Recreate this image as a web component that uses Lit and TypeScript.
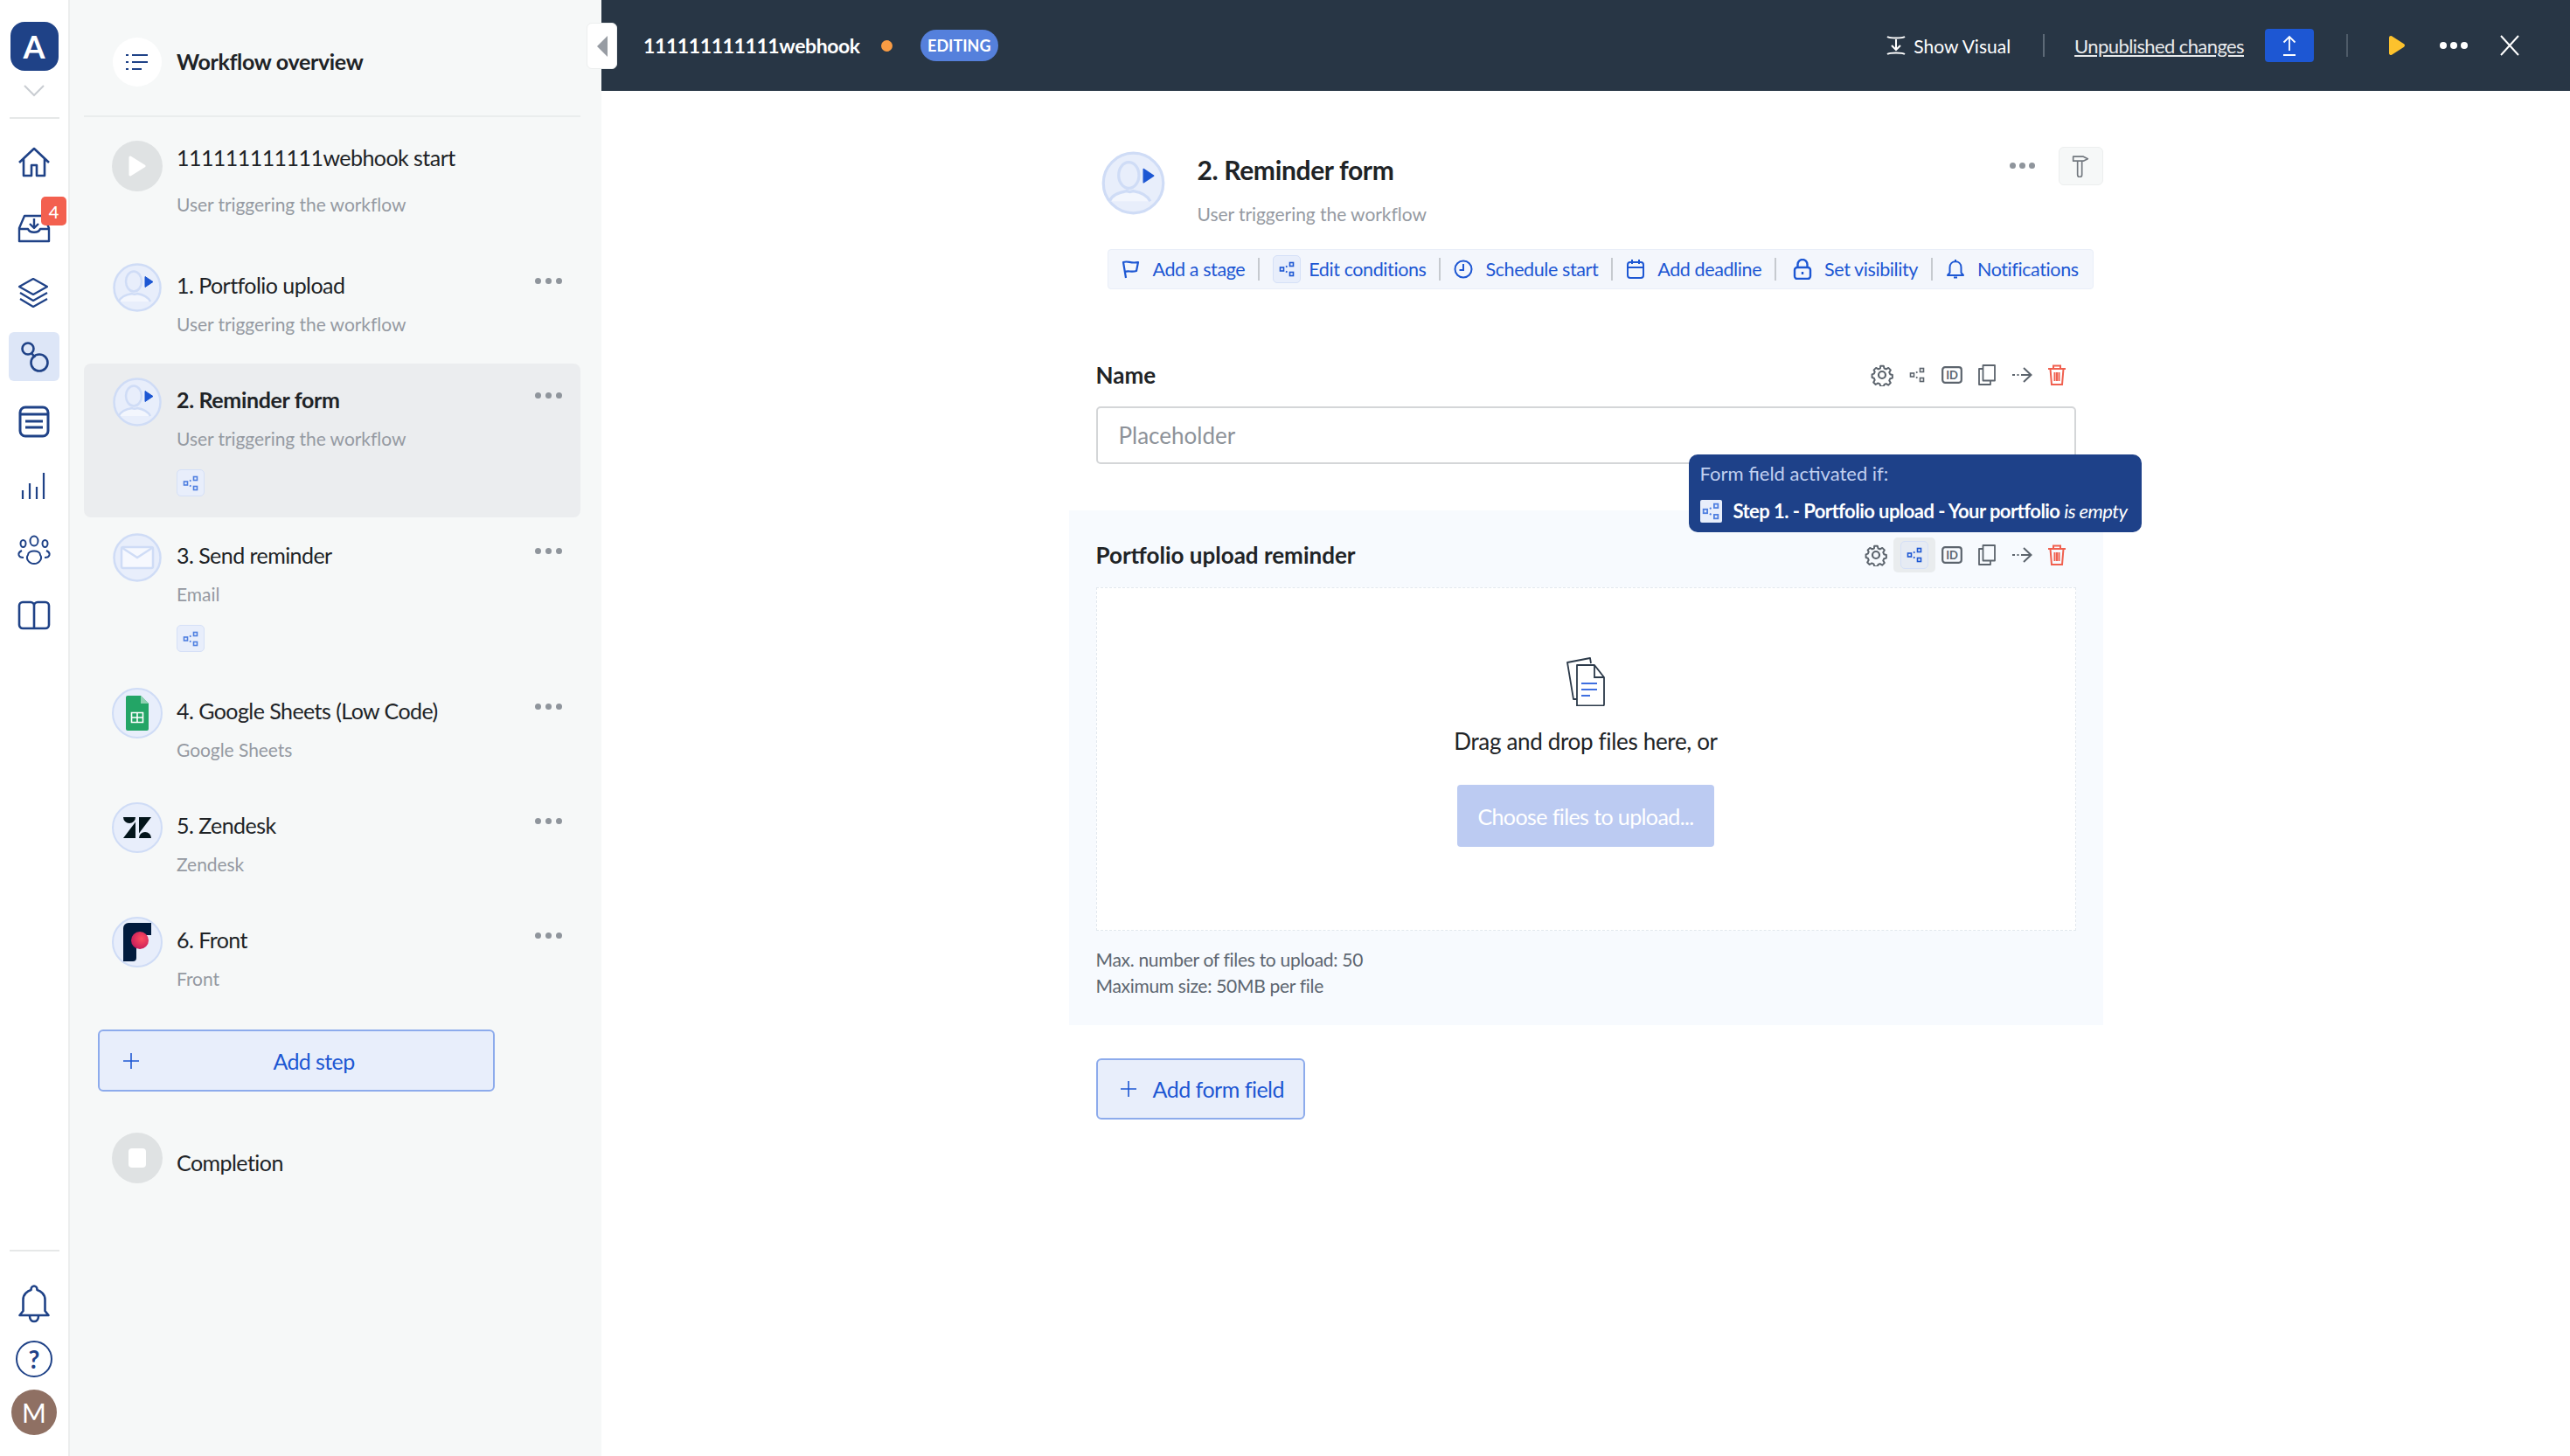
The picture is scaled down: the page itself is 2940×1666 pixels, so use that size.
import { LitElement, html, css, svg } from "lit";
import { customElement } from "lit/decorators.js";

const NAVY = "#1f4287";
const BLUE = "#1d57d3";
const GREY = "#5c646d";

const icon = (w: number, h: number, vb: string, body: unknown, cls = "") =>
  html`<svg class=${cls} width=${w} height=${h} viewBox=${vb} fill="none">${body}</svg>`;

// small "branch" glyph used on chips and in the field toolbars
const branch = (c: string, s = 18) =>
  icon(s, s, "0 0 18 18", svg`<g stroke=${c} stroke-width="1.6">
    <rect x="1.5" y="7" width="4" height="4"/><rect x="12.5" y="1.5" width="4" height="4"/><rect x="12.5" y="12.5" width="4" height="4"/></g>
    <path d="M8 6.5l1.5-1M8 11.5l1.5 1" stroke=${c} stroke-width="1.8"/>`);

const userIcon = (s: number) =>
  icon(s, s, "0 0 58 58", svg`<circle cx="29" cy="29" r="26.5" fill="#e8eefb" stroke="#cfdcf6" stroke-width="2.5"/>
    <ellipse cx="25" cy="22" rx="9" ry="11.5" stroke="#cfdcf6" stroke-width="2.5"/>
    <path d="M8 45c2-6 9-8 15-9 2 1 4 1 6 0 6 1 12 3 15 9" stroke="#cfdcf6" stroke-width="2.5" fill="#f3f6fd"/>
    <path d="M38 16.5l9 6-9 6z" fill=${BLUE} stroke=${BLUE} stroke-width="1" stroke-linejoin="round"/>`);

const circled = (body: unknown) => html`<div class="logo-c">${body}</div>`;

const mail = html`<svg width="58" height="58" viewBox="0 0 58 58" fill="none"><circle cx="29" cy="29" r="26.5" fill="#e8eefb" stroke="#cfdcf6" stroke-width="2.5"/>
  <rect x="11" y="17" width="36" height="24" rx="2" fill="#f6f8fe" stroke="#cfdcf6" stroke-width="2.5"/><path d="M12 18l17 11 17-11" stroke="#cfdcf6" stroke-width="2.5"/></svg>`;

const sheets = circled(icon(26, 40, "0 0 26 40", svg`<path d="M2 0h15l9 9v29a2 2 0 0 1-2 2H2a2 2 0 0 1-2-2V2a2 2 0 0 1 2-2z" fill="#23a566"/>
  <path d="M17 0l9 9h-9z" fill="#8ed1b1"/><path d="M6.5 19.5h13v11h-13zM6.5 25h13M13 19.5v11" stroke="#fff" stroke-width="1.6"/>`));

const zendesk = circled(icon(32, 24, "0 0 32 24", svg`<path fill="#03141a" d="M14 5.5V24H0zM18 18.5V0h14zM0 0h14a7 7 0 0 1-14 0zM18 24a7 7 0 0 1 14 0z"/>`));

const front = circled(icon(32, 44, "0 0 32 44", svg`<defs><radialGradient id="fg" cx=".6" cy=".4" r=".7"><stop offset="0" stop-color="#ff4d5e"/><stop offset="1" stop-color="#c2185b"/></radialGradient></defs>
  <path fill="#011b3d" d="M6 0h26v14H24c-6 0-9 3-9 9v17a4 4 0 0 1-4 4H0V6a6 6 0 0 1 6-6z"/><circle cx="19" cy="20" r="10" fill="url(#fg)"/>`));

const steps = [
  { title: "1. Portfolio upload", sub: "User triggering the workflow", logo: userIcon(58) },
  { title: "2. Reminder form", sub: "User triggering the workflow", logo: userIcon(58), active: true, chip: true },
  { title: "3. Send reminder", sub: "Email", logo: mail, chip: true },
  { title: "4. Google Sheets (Low Code)", sub: "Google Sheets", logo: sheets },
  { title: "5. Zendesk", sub: "Zendesk", logo: zendesk },
  { title: "6. Front", sub: "Front", logo: front },
];

const s = (d: unknown) => icon(38, 38, "0 0 38 38", d);
const rail = [
  s(svg`<path d="M2 19L19 3l17 16M7 15v19h9v-12h6v12h9V15" stroke=${NAVY} stroke-width="2.6" stroke-linejoin="round"/>`),
  s(svg`<path d="M2 35V20L8 6h22l6 14v15zM2 21h10c2 5 12 5 14 0h10M19 9v11M14 15l5 5 5-5" stroke=${NAVY} stroke-width="2.4" stroke-linejoin="round"/>`),
  s(svg`<path d="M18 4l16 9-16 9-16-9zM3 20l15 9 16-9M3 27l15 9 16-9" stroke=${NAVY} stroke-width="2.2" stroke-linejoin="round"/>`),
  s(svg`<circle cx="12" cy="10" r="6.5" stroke=${NAVY} stroke-width="2.6"/><circle cx="25" cy="26" r="9.5" stroke=${NAVY} stroke-width="2.6"/><path d="M16 15l4 5" stroke=${NAVY} stroke-width="2.6"/>`),
  s(svg`<rect x="3" y="3" width="32" height="33" rx="6" stroke=${NAVY} stroke-width="3"/><path d="M3 11h32M9 19h20M9 26h20" stroke=${NAVY} stroke-width="2.8"/>`),
  s(svg`<path d="M6 34V24M14 34V16M22 34V20M30 34V4" stroke=${NAVY} stroke-width="2.2"/>`),
  icon(40, 36, "0 0 40 36", svg`<g stroke=${NAVY} stroke-width="2"><ellipse cx="20" cy="7" rx="4.5" ry="5.5"/><ellipse cx="7.5" cy="10" rx="3" ry="4"/><ellipse cx="32.5" cy="10" rx="3" ry="4"/>
    <path d="M13 23c0-6 14-6 14 0 3 4-1 10-7 10s-10-6-7-10zM6 18c-6 3-4 8 2 8M34 18c6 3 4 8-2 8"/></g>`),
  s(svg`<path d="M19 6V34H6a4 4 0 0 1-4-4V8a4 4 0 0 1 4-4h9a4 4 0 0 1 4 4a4 4 0 0 1 4-4h9a4 4 0 0 1 4 4v22a4 4 0 0 1-4 4H19" stroke=${NAVY} stroke-width="2.6"/>`),
];

const tb = (d: unknown) => icon(22, 24, "0 0 22 24", d);
const tools = [
  { label: "Add a stage", ic: tb(svg`<path d="M5 22L2 4c6-2 8 2 17 0l-2 10c-6 2-9-1-13 1" stroke=${BLUE} stroke-width="2.2" stroke-linejoin="round"/>`) },
  { label: "Edit conditions", ic: html`<span class="chip tool-chip">${branch(BLUE, 18)}</span>`, tight: true },
  { label: "Schedule start", ic: tb(svg`<circle cx="11" cy="12" r="9.5" stroke=${BLUE} stroke-width="2"/><path d="M11 6v7H6.5" stroke=${BLUE} stroke-width="2"/>`) },
  { label: "Add deadline", ic: tb(svg`<rect x="2" y="4" width="18" height="18" rx="3" stroke=${BLUE} stroke-width="2"/><path d="M2 10h18M7 1v5M15 1v5" stroke=${BLUE} stroke-width="2"/>`) },
  { label: "Set visibility", ic: tb(svg`<rect x="2" y="10" width="18" height="13" rx="3" stroke=${BLUE} stroke-width="2.4"/><path d="M5.5 10V6.5a5.5 5.5 0 0 1 11 0V10M11 15v3" stroke=${BLUE} stroke-width="2.4"/>`), wide: true },
  { label: "Notifications", ic: tb(svg`<path d="M2 19h18l-2.5-3V10c0-9-13-9-13 0v6zM9 21.5h4M11 1v2" stroke=${BLUE} stroke-width="2" stroke-linejoin="round"/>`) },
];

const gear = icon(26, 26, "0 0 26 26", svg`<path d="M11 1.5h4l.8 3.2 2.4 1 2.9-1.7 2.8 2.8-1.7 2.9 1 2.4 3 .9v4l-3 .8-1 2.4 1.7 2.9-2.8 2.8-2.9-1.7-2.4 1-.8 2.3h-4l-.8-3-2.4-1-2.9 1.7-2.8-2.8 1.7-2.9-1-2.4-2.5-.8v-4l2.5-.9 1-2.4L2.6 6.8l2.8-2.8 2.9 1.7 2.4-1z" transform="translate(1.3 1.3) scale(.9)" stroke=${GREY} stroke-width="2.2" stroke-linejoin="round"/><circle cx="13" cy="13" r="4" stroke=${GREY} stroke-width="2.2"/>`);
const idIcon = icon(24, 20, "0 0 24 20", svg`<rect x="1.2" y="1.2" width="21.6" height="17.6" rx="3" stroke=${GREY} stroke-width="2.2"/><text x="12" y="15" text-anchor="middle" font-family="Lato" font-weight="700" font-size="13" fill=${GREY}>ID</text>`);
const copy = icon(20, 24, "0 0 20 24", svg`<path d="M5.5 1h9l4.5 0v17.5H5.5z M5.5 5H1v18h13v-4.5" stroke=${GREY} stroke-width="1.8" stroke-linejoin="round"/>`);
const arrow = icon(24, 20, "0 0 24 20", svg`<path d="M1 10h3M6.5 10h2M11 10h11M14 2l8.5 8-8.5 8" stroke=${GREY} stroke-width="2"/>`);
const trash = icon(22, 24, "0 0 22 24", svg`<path d="M1 5h20M7 5V1.5h8V5M3.5 5l1.5 18h12l1.5-18M8.5 9v10M11 9v10M13.5 9v10" stroke="#f0604f" stroke-width="2"/>`);

const dots = html`<div class="dots"><i></i><i></i><i></i></div>`;
const plus = (c: string) => icon(20, 20, "0 0 20 20", svg`<path d="M10 1v18M1 10h18" stroke=${c} stroke-width="1.6"/>`);

@customElement("app-root")
export class AppRoot extends LitElement {
  static styles = css`
    :host { display: block; height: 1666px; font-family: "Lato", "Noto Sans", sans-serif; color: #202326; overflow: hidden; }
    .app { display: flex; height: 100%; }
    svg { display: block; flex: none; }

    .rail { width: 80px; flex: none; background: #fff; border-right: 2px solid #eceeee; box-sizing: border-box; display: flex; flex-direction: column; align-items: center; }
    .logo { margin-top: 25px; width: 55px; height: 56px; border-radius: 16px; background: #1f4287; color: #fff; font-size: 36px; font-weight: 700; display: flex; align-items: center; justify-content: center; }
    .chev { margin-top: 16px; }
    .rule { width: 57px; height: 2px; background: #e6e8e8; flex: none; }
    .rail .top-rule { margin-top: 23px; }
    .nav { margin-top: 22px; display: flex; flex-direction: column; align-items: center; }
    .nav-i { position: relative; width: 58px; height: 56px; display: flex; align-items: center; justify-content: center; margin-bottom: 18px; border-radius: 6px; }
    .nav-i.on { background: #dde6f7; }
    .badge { position: absolute; left: 37px; top: -7px; width: 29px; height: 33px; border-radius: 5px; background: #f3604f; color: #fff; font-size: 20px; font-weight: 500; display: flex; align-items: center; justify-content: center; }
    .bottom { margin-top: auto; display: flex; flex-direction: column; align-items: center; padding-bottom: 24px; }
    .bell { margin-top: 38px; }
    .help { margin-top: 20px; width: 38px; height: 38px; border: 2px solid #1f4287; border-radius: 50%; color: #1f4287; font-size: 28px; font-weight: 700; display: flex; align-items: center; justify-content: center; }
    .avatar { margin-top: 14px; width: 52px; height: 52px; border-radius: 50%; background: #8f7063; color: #fff; font-size: 30px; display: flex; align-items: center; justify-content: center; }

    .side { width: 608px; flex: none; box-sizing: border-box; background: #f6f8f8; padding: 0 24px 0 16px; position: relative; }
    .toggle { position: absolute; left: 591px; top: 26px; width: 35px; height: 53px; box-sizing: border-box; background: #fff; border: 1px solid #eceeee; border-radius: 6px; display: flex; align-items: center; justify-content: center; z-index: 3; }
    .overview { height: 134px; box-sizing: border-box; border-bottom: 2px solid #eaeded; display: flex; align-items: center; gap: 17px; padding: 0 0 0 33px; }
    .ov-c { width: 56px; height: 56px; border-radius: 50%; background: #fff; display: flex; align-items: center; justify-content: center; margin-top: 10px; }
    .overview b { font-size: 25px; font-weight: 700; margin-top: 8px; letter-spacing: -0.33px; }

    .step { display: flex; padding: 15px 21px 0 32px; border-radius: 8px; margin-bottom: 2px; height: 114px; }
    .step.tall { height: 161px; }
    .step.active { background: #ebedef; }
    .step .ic { width: 58px; height: 58px; flex: none; }
    .logo-c { width: 58px; height: 58px; box-sizing: border-box; border: 2px solid #cfdcf6; border-radius: 50%; background: #e8eefb; display: flex; align-items: center; justify-content: center; }
    .gray-c { width: 58px; height: 58px; border-radius: 50%; background: #dfe2e3; display: flex; align-items: center; justify-content: center; }
    .txt { flex: 1; margin-left: 16px; padding-top: 10px; }
    .t { font-size: 25px; line-height: 32px; letter-spacing: -0.55px; }
    .active .t { font-weight: 700; letter-spacing: -0.35px; }
    .d { font-size: 21px; line-height: 28px; margin-top: 15px; color: #959aa2; letter-spacing: -0.05px; }
    .chip { display: inline-flex; align-items: center; justify-content: center; width: 32px; height: 31px; box-sizing: border-box; background: #e8eefb; border: 1px solid #d5e0f7; border-radius: 5px; }
    .txt .chip { margin-top: 21px; }
    .dots { display: flex; gap: 5px; margin-top: 18px; height: 7px; flex: none; }
    .dots i { width: 7px; height: 7px; border-radius: 50%; background: #8f959c; }
    .first { height: 151px; padding-top: 27px; margin: 0; box-sizing: border-box; }
    .first .txt { padding-top: 3px; }
    .first .d { margin-top: 24px; }
    .add-step { margin: 15px 0 0 16px; width: 454px; height: 71px; box-sizing: border-box; border: 2px solid #8dabec; border-radius: 6px; background: #e8eefb; color: #1d57d3; font-size: 25px; letter-spacing: -0.6px; display: flex; align-items: center; padding-left: 26px; }
    .add-step span { flex: 1; text-align: center; margin-right: 6px; }
    .done { display: flex; padding: 47px 0 0 32px; }
    .done .t { margin: 18px 0 0 16px; }
    .sq { width: 20px; height: 22px; border-radius: 4px; background: #fff; }

    .main { flex: 1; min-width: 0; display: flex; flex-direction: column; background: #fff; }
    .bar { height: 104px; flex: none; background: #283645; color: #fff; display: flex; align-items: center; padding: 0 57px 0 48px; }
    .bar .name { font-size: 23px; font-weight: 700; letter-spacing: -0.4px; }
    .o-dot { width: 13px; height: 13px; border-radius: 50%; background: #f99c44; margin-left: 24px; }
    .pill { margin-left: 32px; width: 89px; height: 36px; border-radius: 18px; background: #5580dc; font-size: 18px; font-weight: 700; display: flex; align-items: center; justify-content: center; }
    .bar .right { margin-left: auto; display: flex; align-items: center; }
    .visual { font-size: 21px; margin-left: 9px; }
    .vsep { width: 2px; height: 26px; background: #5d6a77; margin: 0 34px 0 37px; }
    .unpub { font-size: 22px; letter-spacing: -0.6px; text-decoration: underline; color: #e8eaec; }
    .up { margin-left: 24px; width: 56px; height: 38px; border-radius: 4px; background: #1d57d3; display: flex; align-items: center; justify-content: center; }
    .vsep2 { width: 2px; height: 26px; background: #4e5b68; margin: 0 46px 0 37px; }
    .bar .dots { margin: 0 0 0 39px; height: 8px; gap: 4px; }
    .bar .dots i { width: 8px; height: 8px; background: #fff; }
    .x { margin-left: 36px; }

    .form { width: 1183px; align-self: center; padding-top: 64px; position: relative; }
    .head { display: flex; height: 117px; padding: 0 0 0 36px; box-sizing: border-box; }
    .head .av { margin-top: 4px; }
    .head-t { flex: 1; margin: 6px 0 0 36px; }
    .head-t .h { font-size: 30px; font-weight: 700; line-height: 40px; letter-spacing: -0.35px; }
    .head-t .d { margin-top: 17px; }
    .head .dots { margin: 18px 27px 0 0; gap: 4px; }
    .head .dots i { width: 7px; height: 7px; }
    .ham { width: 51px; height: 44px; box-sizing: border-box; background: #f6f8f8; border: 1px solid #eceeee; border-radius: 6px; display: flex; align-items: center; justify-content: center; }

    .toolbar { margin-left: 44px; width: 1128px; height: 46px; box-sizing: border-box; background: #f3f6fc; border: 1px solid #e9eef8; border-radius: 4px; display: flex; align-items: center; padding-left: 15px; color: #1d57d3; font-size: 21.5px; letter-spacing: -0.4px; white-space: nowrap; }
    .tool { display: flex; align-items: center; gap: 14px; }
    .tool.tight { gap: 9px; }
    .tool.wide { margin-left: 4px; }
    .tool-chip { height: 32px; }
    .tsep { width: 2px; height: 26px; background: #c6cacf; margin: 0 15px; }

    .field { padding: 0 31px; margin-top: 78px; }
    .row { display: flex; align-items: center; height: 40px; }
    .label { font-size: 26px; font-weight: 700; flex: 1; }
    .acts { display: flex; align-items: center; margin-right: 2px; }
    .acts > * { width: 40px; display: flex; justify-content: center; }
    .acts .sel { width: 48px; height: 40px; margin: 0 -1px 0 0; align-items: center; background: #e9ecee; border-radius: 5px; }
    .acts .sel .chip { width: 32px; height: 32px; background: #e6ebf3; }
    .input { margin-top: 16px; height: 66px; box-sizing: border-box; border: 2px solid #d4d6d8; border-radius: 5px; padding-left: 24px; color: #8d9299; font-size: 26px; display: flex; align-items: center; background: #fff; }
    .section { margin-top: 53px; background: #f7fafe; padding: 31px 31px 30px; }
    .drop { margin-top: 17px; height: 393px; box-sizing: border-box; background: #fff; border: 1px dashed #e2e8ee; display: flex; flex-direction: column; align-items: center; padding-top: 79px; }
    .drop p { margin: 24px 0 0; font-size: 26px; line-height: 32px; letter-spacing: -0.33px; }
    .choose { margin-top: 34px; width: 294px; height: 71px; border-radius: 4px; background: #bccbf2; color: #fff; font-size: 25px; letter-spacing: -0.6px; display: flex; align-items: center; justify-content: center; }
    .meta { margin-top: 18px; font-size: 21px; line-height: 30px; color: #5d6670; letter-spacing: -0.3px; }
    .add-field { margin: 38px 0 0 31px; width: 239px; height: 70px; box-sizing: border-box; border: 2px solid #8dabec; border-radius: 6px; background: #e8eefb; color: #1d57d3; font-size: 25px; letter-spacing: -0.5px; display: flex; align-items: center; gap: 18px; padding-left: 25px; }

    .tip { position: absolute; left: 709px; top: 416px; width: 518px; height: 89px; box-sizing: border-box; background: #1e4189; border-radius: 10px; padding: 8px 0 0 13px; color: #fff; z-index: 2; }
    .tip .a { font-size: 22px; line-height: 28px; color: #c0cff0; }
    .tip .b { display: flex; align-items: center; gap: 13px; margin-top: 15px; font-size: 22px; font-weight: 700; letter-spacing: -0.55px; white-space: nowrap; }
    .tip .b em { font-weight: 400; }
    .tip .chip { width: 25px; height: 26px; border: none; border-radius: 2px; }
  `;

  render() {
    return html`<div class="app">
      ${this.renderRail()}
      ${this.renderSide()}
      <div class="main">
        ${this.renderBar()}
        ${this.renderForm()}
      </div>
    </div>`;
  }

  renderRail() {
    return html`<nav class="rail">
      <div class="logo">A</div>
      <div class="chev">${icon(24, 14, "0 0 24 14", svg`<path d="M1 1l11 11L23 1" stroke="#c9cdd2" stroke-width="2"/>`)}</div>
      <div class="rule top-rule"></div>
      <div class="nav">
        ${rail.map((r, i) => html`<div class="nav-i ${i === 3 ? "on" : ""}">${r}${i === 1 ? html`<span class="badge">4</span>` : ""}</div>`)}
      </div>
      <div class="bottom">
        <div class="rule"></div>
        <div class="bell">${icon(36, 44, "0 0 36 44", svg`<path d="M1.5 35h33l-4-5V17c0-6-5-10-9-11 0-6-7-6-7 0-4 1-9 5-9 11v13zM13 36c0 8 10 8 10 0" stroke=${NAVY} stroke-width="2.6" stroke-linejoin="round"/>`)}</div>
        <div class="help">?</div>
        <div class="avatar">M</div>
      </div>
    </nav>`;
  }

  renderSide() {
    return html`<aside class="side">
      <div class="toggle">${icon(14, 24, "0 0 14 24", svg`<path d="M13 0v24L1 12z" fill="#979ca3"/>`)}</div>
      <div class="overview">
        <div class="ov-c">${icon(26, 22, "0 0 26 22", svg`<path d="M7 3h18M7 11h18M7 19h11" stroke=${NAVY} stroke-width="2.2"/><path d="M0 3h3M0 11h3M0 19h3" stroke=${NAVY} stroke-width="2.2"/>`)}</div>
        <b>Workflow overview</b>
      </div>
      <div class="step first">
        <div class="ic gray-c">${icon(20, 24, "0 0 20 24", svg`<path d="M2 2l16 10L2 22z" fill="#fff" stroke="#fff" stroke-width="3" stroke-linejoin="round"/>`)}</div>
        <div class="txt"><div class="t">111111111111webhook start</div><div class="d">User triggering the workflow</div></div>
      </div>
      ${steps.map(st => html`<div class="step ${st.active ? "active" : ""} ${st.chip ? "tall" : ""}">
        <div class="ic">${st.logo}</div>
        <div class="txt">
          <div class="t">${st.title}</div>
          <div class="d">${st.sub}</div>
          ${st.chip ? html`<div class="chip">${branch("#4f7fe0", 18)}</div>` : ""}
        </div>
        ${dots}
      </div>`)}
      <div class="add-step">${plus(BLUE)}<span>Add step</span></div>
      <div class="done">
        <div class="gray-c"><div class="sq"></div></div>
        <div class="t">Completion</div>
      </div>
    </aside>`;
  }

  renderBar() {
    return html`<header class="bar">
      <div class="name">111111111111webhook</div>
      <div class="o-dot"></div>
      <div class="pill">EDITING</div>
      <div class="right">
        ${icon(22, 24, "0 0 22 24", svg`<path d="M1 2c3 2 17 2 20 0M1 22c3-2 17-2 20 0M11 5v11M6 12l5 5 5-5" stroke="#fff" stroke-width="2"/>`)}
        <span class="visual">Show Visual</span>
        <div class="vsep"></div>
        <span class="unpub">Unpublished changes</span>
        <div class="up">${icon(16, 24, "0 0 16 24", svg`<path d="M8 18V2M1.5 8.5L8 2l6.5 6.5M1 23h14" stroke="#fff" stroke-width="1.8"/>`)}</div>
        <div class="vsep2"></div>
        ${icon(20, 24, "0 0 20 24", svg`<path d="M3 3l14 9-14 9z" fill="#fcc22d" stroke="#fcc22d" stroke-width="4" stroke-linejoin="round"/>`)}
        <div class="dots"><i></i><i></i><i></i></div>
        <div class="x">${icon(24, 24, "0 0 24 24", svg`<path d="M2 1l20 22M22 1L2 23" stroke="#fff" stroke-width="2"/>`)}</div>
      </div>
    </header>`;
  }

  renderForm() {
    const acts = (sel: boolean) => html`<div class="acts">
      <span>${gear}</span>
      ${sel ? html`<span class="sel"><span class="chip">${branch(BLUE, 18)}</span></span>` : html`<span>${branch(GREY, 18)}</span>`}
      <span>${idIcon}</span><span>${copy}</span><span>${arrow}</span><span>${trash}</span>
    </div>`;
    return html`<section class="form">
      <div class="head">
        <div class="av">${userIcon(75)}</div>
        <div class="head-t"><div class="h">2. Reminder form</div><div class="d">User triggering the workflow</div></div>
        ${dots}
        <div class="ham">${icon(20, 26, "0 0 24 30", svg`<path d="M2 2h14l6 3-6 3H2zM8 8h6v19a3 3 0 0 1-6 0z" stroke="#72787f" stroke-width="2" stroke-linejoin="round"/>`)}</div>
      </div>
      <div class="toolbar">
        ${tools.map((t, i) => html`${i ? html`<div class="tsep"></div>` : ""}<div class="tool ${t.tight ? "tight" : ""} ${t.wide ? "wide" : ""}">${t.ic}<span>${t.label}</span></div>`)}
      </div>
      <div class="field">
        <div class="row"><div class="label">Name</div>${acts(false)}</div>
        <div class="input">Placeholder</div>
      </div>
      <div class="section">
        <div class="row"><div class="label">Portfolio upload reminder</div>${acts(true)}</div>
        <div class="drop">
          ${icon(44, 56, "0 0 44 56", svg`<path d="M12 48l-4 0-7-42 26-5 1 6" stroke="#2c3a4a" stroke-width="1.8" stroke-linejoin="round"/><path d="M12 9h20l11 14v31a1.5 1.5 0 0 1-1.5 1.5H12z" fill="#fff" stroke="#2c3a4a" stroke-width="1.8" stroke-linejoin="round"/><path d="M32 9v14h11" stroke="#2c3a4a" stroke-width="1.8"/><path d="M17 30h18M17 37h18M17 44h10" stroke="#3f6fe0" stroke-width="2"/>`)}
          <p>Drag and drop files here, or</p>
          <div class="choose">Choose files to upload...</div>
        </div>
        <div class="meta">Max. number of files to upload: 50<br />Maximum size: 50MB per file</div>
      </div>
      <div class="add-field">${plus(BLUE)}<span>Add form field</span></div>
      <div class="tip">
        <div class="a">Form field activated if:</div>
        <div class="b"><span class="chip">${branch("#4f7fe0", 20)}</span><span>Step 1. - Portfolio upload - Your portfolio <em>is empty</em></span></div>
      </div>
    </section>`;
  }
}
